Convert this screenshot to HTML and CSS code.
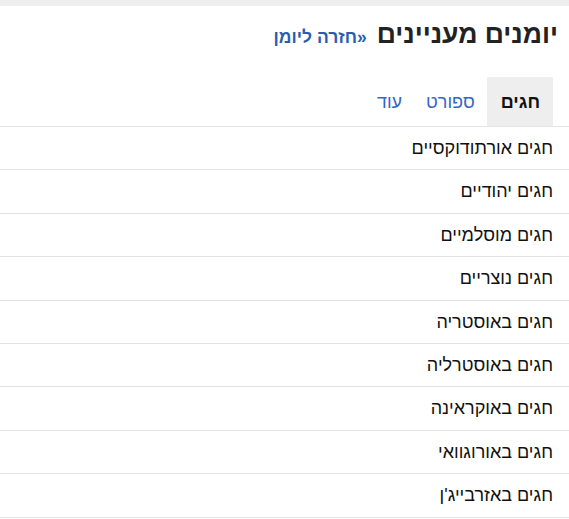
FILE: index.html
```html
<!DOCTYPE html>
<html lang="he" dir="rtl">
<head>
<meta charset="utf-8">
<link rel="stylesheet" href="styles.css">
</head>
<body>
<div class="topbar"></div>
<div class="header">
  <h1 class="title">יומנים מעניינים</h1>
  <a class="back" href="#">«חזרה ליומן</a>
</div>
<div class="tabs">
  <div class="tab active">חגים</div>
  <div class="tab">ספורט</div>
  <div class="tab">עוד</div>
</div>
<ul class="list">
  <li class="item">חגים אורתודוקסיים</li>
  <li class="item">חגים יהודיים</li>
  <li class="item">חגים מוסלמיים</li>
  <li class="item">חגים נוצריים</li>
  <li class="item">חגים באוסטריה</li>
  <li class="item">חגים באוסטרליה</li>
  <li class="item">חגים באוקראינה</li>
  <li class="item">חגים באורוגוואי</li>
  <li class="item">חגים באזרבייג'ן</li>
</ul>
</body>
</html>
```
FILE: styles.css
```css
html, body {
  margin: 0;
  padding: 0;
  background: #fff;
  font-family: Arial, "Liberation Sans", sans-serif;
  color: #222;
}
.topbar {
  height: 6px;
  background: #eeeeee;
}
.header {
  display: flex;
  align-items: baseline;
  gap: 10px;
  padding: 13px 11px 0 0;
  height: 58px;
  box-sizing: border-box;
}
.title {
  margin: 0;
  font-size: 26.5px;
  font-weight: bold;
  color: #222;
}
.back {
  font-size: 17.5px;
  font-weight: bold;
  color: #2a5db0;
  text-decoration: none;
}
.tabs {
  display: flex;
  padding: 13px 16px 0 0;
  border-bottom: 1px solid #e5e5e5;
}
.tab {
  height: 49px;
  line-height: 51px;
  padding: 0 12px;
  font-size: 18px;
  color: #3366cc;
}
.tab.active {
  background: #eeeeee;
  color: #111;
  font-weight: bold;
  padding: 0 13px 0 14px;
}
.list {
  list-style: none;
  margin: 0;
  padding: 0;
}
.item {
  height: 42.4px;
  line-height: 43px;
  padding-right: 16px;
  font-size: 18px;
  color: #111;
  border-bottom: 1px solid #e3e3e3;
}
```
